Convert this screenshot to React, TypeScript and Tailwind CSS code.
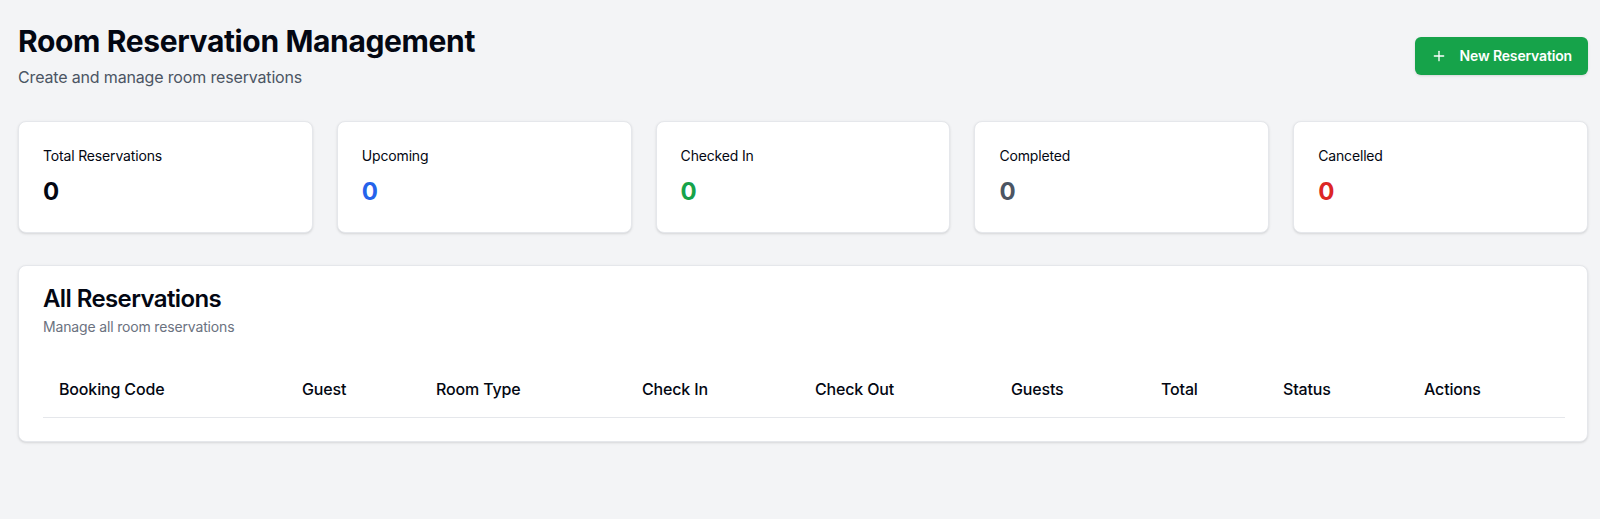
import { Plus } from "lucide-react"

const stats = [
  { label: "Total Reservations", value: 0, color: "text-[#030712]" },
  { label: "Upcoming", value: 0, color: "text-[#2563eb]" },
  { label: "Checked In", value: 0, color: "text-[#16a34a]" },
  { label: "Completed", value: 0, color: "text-[#4b5563]" },
  { label: "Cancelled", value: 0, color: "text-[#dc2626]" },
]

const columns = [
  { name: "Booking Code", width: "w-[243px]" },
  { name: "Guest", width: "w-[134px]" },
  { name: "Room Type", width: "w-[206px]" },
  { name: "Check In", width: "w-[173px]" },
  { name: "Check Out", width: "w-[196px]" },
  { name: "Guests", width: "w-[150px]" },
  { name: "Total", width: "w-[122px]" },
  { name: "Status", width: "w-[141px]" },
  { name: "Actions", width: "w-[157px]" },
]

export default function App() {
  return (
    <div className="min-h-[519px] bg-[#f3f4f6] font-['Inter',sans-serif] tracking-[-0.01em] text-[#030712]">
      <main className="w-[1570px] ml-[18px] pt-[23px] pb-8">
        {/* header */}
        <div className="flex items-center justify-between mb-8">
          <div>
            <h1 className="text-3xl font-bold tracking-[-0.012em]">Room Reservation Management</h1>
            <p className="mt-1.5 text-base text-[#4b5563]">Create and manage room reservations</p>
          </div>
          <button className="flex items-center h-[38px] px-4 rounded-md bg-[#16a34a] text-white text-sm font-semibold shadow-sm">
            <Plus className="w-4 h-4 mr-[13px]" strokeWidth={2} />
            New Reservation
          </button>
        </div>

        {/* stats */}
        <div className="grid grid-cols-5 gap-6 mb-8">
          {stats.map((stat) => (
            <div key={stat.label} className="rounded-lg border border-[#e5e7eb] bg-white p-6 shadow-sm">
              <p className="text-sm">{stat.label}</p>
              <p className={`mt-2.5 text-2xl font-bold ${stat.color}`}>{stat.value}</p>
            </div>
          ))}
        </div>

        {/* reservations table */}
        <div className="rounded-lg border border-[#e5e7eb] bg-white shadow-sm">
          <div className="px-6 pt-[21px] pb-[25px] flex flex-col space-y-1.5">
            <h2 className="text-2xl font-semibold leading-none tracking-tight">All Reservations</h2>
            <p className="text-sm text-[#6b7280]">Manage all room reservations</p>
          </div>
          <div className="px-6 pb-[23px]">
            <table className="w-full table-fixed text-base">
              <thead>
                <tr className="border-b border-[#e5e7eb]">
                  {columns.map((col) => (
                    <th key={col.name} className={`${col.width} h-[55px] px-4 text-left align-middle font-medium`}>
                      {col.name}
                    </th>
                  ))}
                </tr>
              </thead>
              <tbody />
            </table>
          </div>
        </div>
      </main>
    </div>
  )
}
